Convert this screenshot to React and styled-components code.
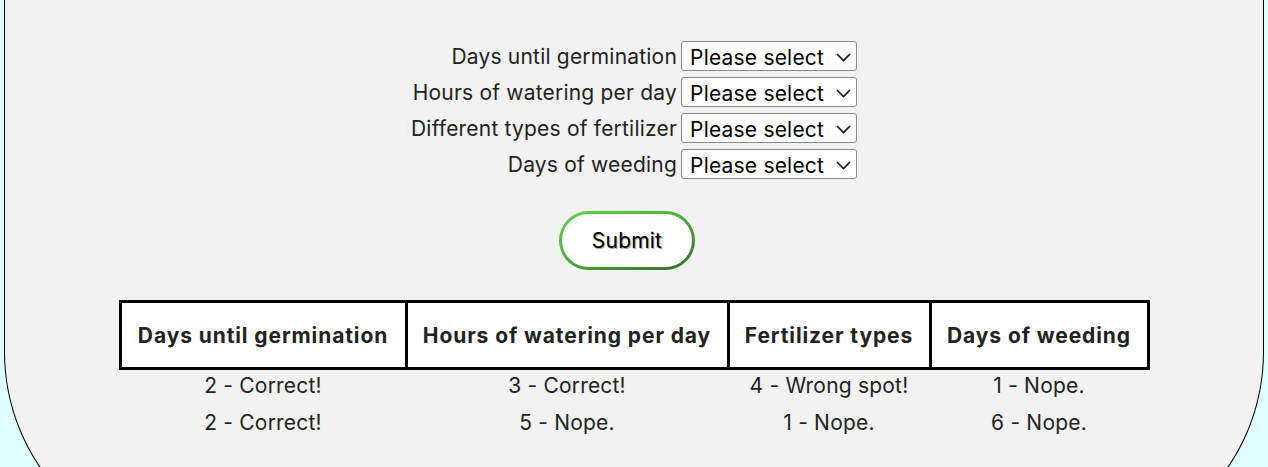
import React from 'react';
import styled, { createGlobalStyle } from 'styled-components';

const GlobalStyle = createGlobalStyle`
  html, body {
    margin: 0;
    padding: 0;
    background-color: #e0ffff;
  }
  body {
    padding: 0 4px;
    font-family: Inter, "Noto Sans", sans-serif;
    color: #222;
    overflow: hidden;
  }
`;

const fields = [
  'Days until germination',
  'Hours of watering per day',
  'Different types of fertilizer',
  'Days of weeding',
];

const headers = [
  { title: 'Days until germination', width: 283 },
  { title: 'Hours of watering per day', width: 319 },
  { title: 'Fertilizer types', width: 199 },
  { title: 'Days of weeding', width: 215 },
];

const guesses = [
  ['2 - Correct!', '3 - Correct!', '4 - Wrong spot!', '1 - Nope.'],
  ['2 - Correct!', '5 - Nope.', '1 - Nope.', '6 - Nope.'],
];

const App = () => {
  return (
    <>
      <GlobalStyle />
      <StCard>
        <StForm onSubmit={(e) => e.preventDefault()}>
          {fields.map((name) => (
            <React.Fragment key={name}>
              <StLabel>{name}</StLabel>
              <StSelectWrap>
                <StSelect defaultValue="">
                  <option value="">Please select</option>
                  {[1, 2, 3, 4, 5, 6].map((n) => (
                    <option key={n} value={n}>{n}</option>
                  ))}
                </StSelect>
                <StChevron width="15" height="9" viewBox="0 0 15 9">
                  <path d="M1 1 L7.5 7.6 L14 1" fill="none" stroke="#111" strokeWidth="1.5" />
                </StChevron>
              </StSelectWrap>
            </React.Fragment>
          ))}
        </StForm>
        <StSubmit type="button">Submit</StSubmit>
        <StTable>
          <thead>
            <tr>
              {headers.map((h) => (
                <StTh key={h.title} style={{ width: h.width }}>{h.title}</StTh>
              ))}
            </tr>
          </thead>
          <tbody>
            {guesses.map((row, i) => (
              <tr key={i}>
                {row.map((cell, j) => (
                  <StTd key={j}>{cell}</StTd>
                ))}
              </tr>
            ))}
          </tbody>
        </StTable>
      </StCard>
    </>
  );
};

const StCard = styled.div`
  display: flex;
  flex-direction: column;
  align-items: center;
  min-height: 515px;
  padding-top: 41px;
  background-color: #f2f2f2;
  border: 1px solid #000;
  border-top: none;
  border-radius: 0 0 205px 205px;
`;

const StForm = styled.form`
  display: grid;
  grid-template-columns: auto auto;
  grid-auto-rows: 30px;
  column-gap: 4px;
  row-gap: 6px;
  align-items: center;
`;

const StLabel = styled.label`
  justify-self: end;
  font-size: 21px;
  letter-spacing: 0.2px;
  line-height: 28px;
  padding-top: 2px;
`;

const StSelectWrap = styled.div`
  position: relative;
  width: 176px;
  height: 30px;
`;

const StSelect = styled.select`
  appearance: none;
  width: 100%;
  height: 100%;
  margin: 0;
  padding: 2px 0 0 8px;
  background: #fff;
  border: 1px solid #8a8a8a;
  border-radius: 3px;
  font-family: Inter, "Noto Sans", sans-serif;
  font-size: 21px;
  letter-spacing: 0.2px;
  color: #000;
`;

const StChevron = styled.svg`
  position: absolute;
  right: 6px;
  top: 12px;
  pointer-events: none;
`;

const StSubmit = styled.button`
  margin-top: 32px;
  margin-right: 14px;
  width: 136px;
  height: 59px;
  border: 3px solid transparent;
  border-radius: 30px;
  background:
    linear-gradient(#fff, #fff) padding-box,
    linear-gradient(160deg, #66d44f 0%, #4aa23a 55%, #336f26 100%) border-box;
  font-family: Inter, "Noto Sans", sans-serif;
  font-size: 21px;
  letter-spacing: 0.2px;
  color: #000;
  text-shadow: 1px 1px 1px #999;
  cursor: pointer;
`;

const StTable = styled.table`
  margin-top: 30px;
  border-collapse: collapse;
  table-layout: fixed;
`;

const StTh = styled.th`
  height: 64px;
  padding: 0;
  background-color: #fff;
  border: 3px solid #000;
  font-size: 21px;
  font-weight: 700;
  letter-spacing: 0.9px;
  color: #222;
  text-align: center;
`;

const StTd = styled.td`
  height: 36px;
  padding: 1px 0 0;
  vertical-align: top;
  font-size: 21px;
  line-height: 30px;
  letter-spacing: 0.2px;
  color: #222;
  text-align: center;
`;

export default App;
